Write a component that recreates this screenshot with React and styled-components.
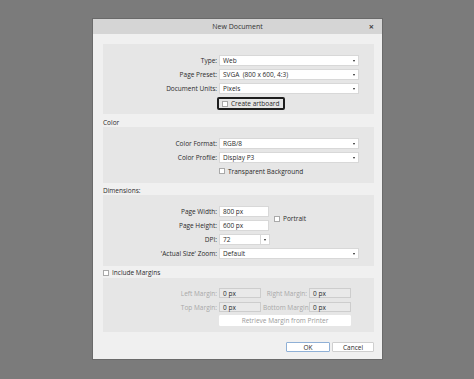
import React from "react";
import styled, { createGlobalStyle } from "styled-components";

const GlobalStyle = createGlobalStyle`
  html, body {
    margin: 0;
    background: #7b7b7b;
    font-family: "Open Sans", "Noto Sans", sans-serif;
  }
`;

const Page = styled.div`
  width: 474px;
  height: 379px;
  padding: 19px 0 0 93px;
  box-sizing: border-box;
`;

const Dialog = styled.div`
  width: 289px;
  height: 340px;
  background: #f0f0f0;
  box-shadow: 0 0 0 1px #6a6a6a;
  display: flex;
  flex-direction: column;
  font-size: 6.5px;
  line-height: 9px;
  color: #2a2a2a;
`;

const TitleBar = styled.div`
  height: 15px;
  flex: none;
  background: #d5d5d5;
  display: flex;
  align-items: center;
  justify-content: center;
  position: relative;
  font-size: 7px;
  color: #333;
`;

const Close = styled.span`
  position: absolute;
  right: 8px;
  top: 3px;
  font-size: 9px;
  font-weight: bold;
  color: #444;
`;

const Body = styled.div`
  flex: 1;
  padding: 10px 8px 0 10px;
  display: flex;
  flex-direction: column;
`;

const Panel = styled.div`
  background: #e6e6e6;
  padding: ${(p) => p.$pad || "11px 15px 4px 0"};
  display: grid;
  grid-template-columns: ${(p) => p.$cols || "114px 140px"};
  column-gap: 2px;
  row-gap: ${(p) => p.$rowGap || "3px"};
  align-items: center;
`;

const SectionLabel = styled.div`
  height: ${(p) => p.$h || 10}px;
  margin-top: ${(p) => p.$top || 0}px;
  display: flex;
  align-items: center;
  gap: 3px;
`;

const Label = styled.div`
  grid-column: ${(p) => p.$col || "1"};
  text-align: right;
  white-space: nowrap;
  color: ${(p) => (p.$disabled ? "#a8a8a8" : "#2a2a2a")};
`;

const Field = styled.div`
  height: ${(p) => p.$h || 11}px;
  box-sizing: border-box;
  width: ${(p) => (p.$w ? p.$w + "px" : "auto")};
  background: ${(p) => (p.$disabled ? "#e9e9e9" : "#fff")};
  border: 1px solid ${(p) => (p.$disabled ? "#cdcdcd" : "#d8d8d8")};
  display: flex;
  align-items: center;
  padding-left: 3px;
  position: relative;
  grid-column: ${(p) => p.$span || "auto"};
  white-space: nowrap;
`;

const Arrow = styled.span`
  position: absolute;
  right: 3px;
  top: 50%;
  margin-top: -1px;
  border-left: 1.5px solid transparent;
  border-right: 1.5px solid transparent;
  border-top: 2px solid #222;
`;

const Split = styled.span`
  position: absolute;
  right: 8px;
  top: 0;
  bottom: 0;
  border-left: 1px solid #d8d8d8;
`;

const Box = styled.span`
  width: 6px;
  height: 6px;
  box-sizing: border-box;
  background: #fff;
  border: 1px solid #a9a9a9;
  flex: none;
`;

const Check = styled.div`
  display: flex;
  align-items: center;
  gap: 3px;
  height: 10px;
  grid-column: ${(p) => p.$col || "2"};
  grid-row: ${(p) => p.$row || "auto"};
  margin-left: ${(p) => p.$left || 0}px;
`;

const Focused = styled.div`
  justify-self: start;
  display: flex;
  align-items: center;
  gap: 3px;
  height: 13px;
  box-sizing: border-box;
  padding: 0 4px 0 3px;
  margin-left: -2px;
  border: 2px solid #1e1e1e;
  border-radius: 2px;
  grid-column: 2;
`;

const Button = styled.div`
  height: ${(p) => p.$h || 10}px;
  width: ${(p) => (p.$w ? p.$w + "px" : "auto")};
  box-sizing: border-box;
  background: #fff;
  border: 1px solid ${(p) => p.$border || "#cfcfcf"};
  display: flex;
  align-items: center;
  justify-content: center;
  color: ${(p) => (p.$muted ? "#9a9a9a" : "#2a2a2a")};
  grid-column: ${(p) => p.$span || "auto"};
  border-radius: 1px;
`;

const Footer = styled.div`
  display: flex;
  justify-content: flex-end;
  gap: 2px;
  margin-top: 10px;
`;

function Select({ children }) {
  return (
    <Field>
      {children}
      <Arrow />
    </Field>
  );
}

export default function App() {
  return (
    <Page>
      <GlobalStyle />
      <Dialog>
        <TitleBar>
          New Document
          <Close>×</Close>
        </TitleBar>
        <Body>
          <Panel>
            <Label>Type:</Label>
            <Select>Web</Select>
            <Label>Page Preset:</Label>
            <Select>SVGA&nbsp; (800 x 600, 4:3)</Select>
            <Label>Document Units:</Label>
            <Select>Pixels</Select>
            <Focused>
              <Box />
              Create artboard
            </Focused>
          </Panel>

          <SectionLabel $top={3}>Color</SectionLabel>
          <Panel $pad="11px 15px 7px 0">
            <Label>Color Format:</Label>
            <Select>RGB/8</Select>
            <Label>Color Profile:</Label>
            <Select>Display P3</Select>
            <Check>
              <Box />
              Transparent Background
            </Check>
          </Panel>

          <SectionLabel $top={2}>Dimensions:</SectionLabel>
          <Panel $pad="11px 15px 7px 0" $cols="114px 51px 87px">
            <Label>Page Width:</Label>
            <Field $w={50}>800 px</Field>
            <Check $col="3" $row="1 / 3" $left={2}>
              <Box />
              Portrait
            </Check>
            <Label>Page Height:</Label>
            <Field $w={50}>600 px</Field>
            <Label>DPI:</Label>
            <Field>
              72
              <Split />
              <Arrow />
            </Field>
            <Label>'Actual Size' Zoom:</Label>
            <Field $span="2 / 4">
              Default
              <Arrow />
            </Field>
          </Panel>

          <SectionLabel $top={1} $h={11}>
            <Box />
            Include Margins
          </SectionLabel>
          <Panel $pad="10px 0 6px 0" $cols="114px 42px 44px 42px" $rowGap="4px">
            <Label $disabled>Left Margin:</Label>
            <Field $disabled $h={10}>0 px</Field>
            <Label $disabled $col="3">Right Margin:</Label>
            <Field $disabled $h={10}>0 px</Field>
            <Label $disabled>Top Margin:</Label>
            <Field $disabled $h={10}>0 px</Field>
            <Label $disabled $col="3">Bottom Margin:</Label>
            <Field $disabled $h={10}>0 px</Field>
            <Button $muted $span="2 / 5" $h={11} $border="#fff" style={{ marginTop: -1 }}>
              Retrieve Margin from Printer
            </Button>
          </Panel>

          <Footer>
            <Button $border="#8fb0d6" $w={44}>OK</Button>
            <Button $w={42}>Cancel</Button>
          </Footer>
        </Body>
      </Dialog>
    </Page>
  );
}
